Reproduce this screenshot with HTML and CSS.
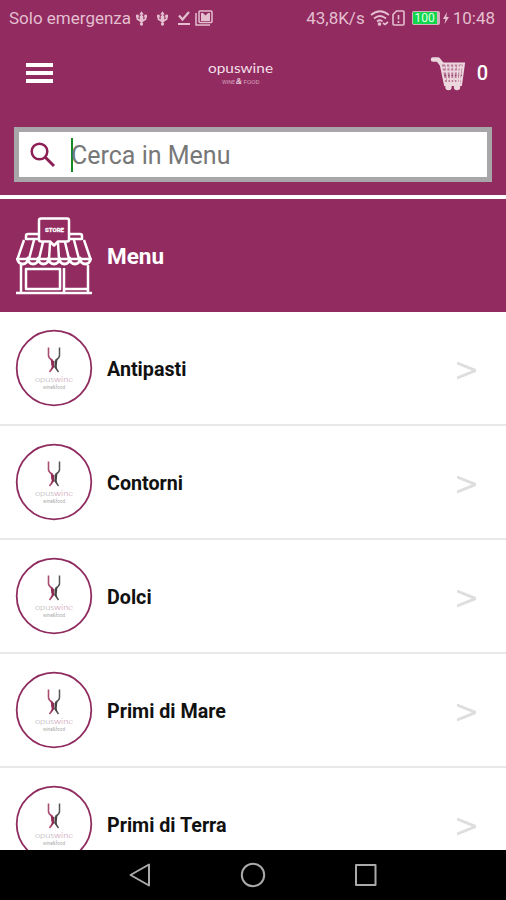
FILE: index.html
```html
<!DOCTYPE html>
<html lang="it">
<head>
    <meta charset="UTF-8">
    <meta name="viewport" content="width=device-width, initial-scale=1.0">
    <title>Opuswine - Menu</title>
    <link rel="stylesheet" href="styles.css">
</head>
<body>
    <!-- icons used more than once -->
    <svg class="defs" width="0" height="0">
        <symbol id="usb" viewBox="0 0 12 16">
            <path d="M6 15V2M1.500 5v3.500L6 11.500M10.500 5v3.500L6 11.500" fill="none" stroke="currentColor" stroke-width="1.800"/>
            <path d="M3.500 3.500L6 0l2.500 3.500zM0 4h3v3H0zM9 4h3v3H9zM4 5h4v5H4z" fill="currentColor"/>
            <circle cx="6" cy="14" r="1.800" fill="currentColor"/>
        </symbol>
        <symbol id="wine" viewBox="0 0 78 78">
            <circle cx="39" cy="39" r="37.300" fill="#fff" stroke="#8f2c60" stroke-width="1.800"/>
            <path d="M33.500 18.500v8q0 2.500 3.500 4.500v4l1 3-3.500 5" fill="none" stroke="#a84c70" stroke-width="1.600"/>
            <path d="M44.500 18.500v8q0 2.500-3.500 4.500v4l-1 3 3.500 5" fill="none" stroke="#555" stroke-width="1.500"/>
            <path d="M35.500 30l3.500 2v6l-3 4 .8-5z" fill="#8f2c55"/>
            <path d="M42.500 30l-3 2v6l3 4-.8-5z" fill="#444"/>
        </symbol>
    </svg>

    <div class="status-bar">
        <span class="carrier">Solo emergenza</span>
        <svg class="usb" width="11" height="15"><use href="#usb"/></svg>
        <svg class="usb second" width="11" height="15"><use href="#usb"/></svg>
        <svg class="download" width="14" height="16" viewBox="0 0 14 16" fill="none" stroke="currentColor" stroke-width="2.200">
            <path d="M2 5.500l3.500 4L12 2M1 14h12"/>
        </svg>
        <svg class="gallery" width="18" height="16" viewBox="0 0 18 16">
            <path d="M1 3v12h14" fill="none" stroke="currentColor" stroke-width="1.500"/>
            <rect x="4" y="1" width="13" height="11.500" rx="1" fill="none" stroke="currentColor" stroke-width="1.500"/>
            <path d="M6 3h2l2.500 2.500L13 3h2v8H6z" fill="currentColor"/>
        </svg>

        <span class="speed">43,8K/s</span>
        <svg class="wifi" width="20" height="16" viewBox="0 0 20 16" fill="none" stroke="currentColor" stroke-width="1.700">
            <path d="M1 5q9-7.500 18 0M4 8.500q6-5 12 0M7 11.500q3-2.500 5.500 0"/>
            <circle cx="9.500" cy="14" r="1" fill="currentColor"/>
            <path d="M13 13l2 1.500 3-2.500"/>
        </svg>
        <svg class="sim" width="13" height="16" viewBox="0 0 13 16" fill="none" stroke="currentColor" stroke-width="1.600">
            <path d="M4.500 1H11q1 0 1 1v12q0 1-1 1H2q-1 0-1-1V4.500zM6.500 5v4.500M6.500 11v2"/>
        </svg>
        <span class="battery">100</span>
        <svg class="bolt" width="6" height="12" viewBox="0 0 6 12"><path d="M4 0L0 7h2.500L1.500 12 6 5H3.300z" fill="currentColor"/></svg>
        <span class="clock">10:48</span>
    </div>

    <header>
        <div class="hamburger">
            <span></span>
            <span></span>
            <span></span>
        </div>
        <svg class="brand" width="68" height="28" viewBox="0 0 68 28">
            <text x="1" y="14" textLength="65" lengthAdjust="spacingAndGlyphs" class="brand-name">opuswine</text>
            <text x="15" y="24.500" textLength="13" lengthAdjust="spacingAndGlyphs" class="brand-sub">WINE</text>
            <text x="29" y="25" textLength="6" lengthAdjust="spacingAndGlyphs" class="brand-amp">&amp;</text>
            <text x="36.500" y="24.500" textLength="16" lengthAdjust="spacingAndGlyphs" class="brand-sub">FOOD</text>
        </svg>
        <div class="cart">
            <svg width="36" height="35" viewBox="0 0 36 35" fill="none" stroke="#ecd7df">
                <path d="M3 3.500h5l4 5" stroke-width="4.500" stroke-linecap="round" stroke-linejoin="round"/>
                <path d="M10.500 7.500H34L31 29H15z" fill="#b87896" stroke-width="2"/>
                <path d="M12 11.500h21M13 15.500h19M13 23h18" stroke-width="1.800" stroke-dasharray="3 .8"/>
                <path d="M14 19.500h18" stroke="#92446c" stroke-width="1.200"/>
                <path d="M16 8l2 20M20 8l1 20M24 8v20M28 8l-1 20M31 9l-2 19" stroke-width="1.600"/>
                <path d="M15 28h15" stroke-width="4"/>
                <circle cx="18.500" cy="31" r="3.200" fill="#ecd7df" stroke="none"/>
                <circle cx="27" cy="31" r="3.200" fill="#ecd7df" stroke="none"/>
            </svg>
            <span class="count">0</span>
        </div>
    </header>

    <div class="search">
        <svg width="26" height="26" viewBox="0 0 26 26" fill="none" stroke="#8c1f55" stroke-width="2.500">
            <circle cx="9.500" cy="9.500" r="7.800"/>
            <path d="M15 15l9 9" stroke-width="3"/>
        </svg>
        <div class="field"><span>Cerca in Menu</span></div>
    </div>

    <div class="title">
        <svg width="78" height="80" viewBox="0 0 78 80" fill="none" stroke="#fff" stroke-width="2.500" stroke-linejoin="round">
            <path d="M25 18H13q-2 0-2 2v4M53 18h12q2 0 2 2v4M11 23h14M53 23h14"/>
            <path d="M26 2.500h26q2 0 2 2v19q0 2-2 2h-9l-4 4-4-4h-9q-2 0-2-2v-19q0-2 2-2z"/>
            <path d="M9 24L2.500 43h73L69 24M19 24l-5 19M28 26l-4 17M35 27l-1 16M43 27l1 16M50 26l4 17M59 24l5 19"/>
            <!-- awning scallops -->
            <path d="M2.500 42c0 8 10.400 8 10.400 0c0 8 10.400 8 10.400 0c0 8 10.400 8 10.400 0c0 8 10.600 8 10.600 0c0 8 10.400 8 10.400 0c0 8 10.400 8 10.400 0c0 8 10.400 8 10.400 0" stroke-width="3"/>
            <path d="M6 49v27M73 49v27M1 77h76M49 52v24M11 53h34v20H11zM50 73h22"/>
            <text x="30" y="16" textLength="19" lengthAdjust="spacingAndGlyphs" class="store">STORE</text>
        </svg>
        <h1>Menu</h1>
    </div>

    <ul class="menu">
        <li>
            <svg class="logo">
                <use href="#wine"/>
                <text x="20" y="53" textLength="38" lengthAdjust="spacingAndGlyphs" class="wine-name">opus<tspan>wine</tspan></text>
                <text x="28" y="59.500" textLength="22" lengthAdjust="spacingAndGlyphs" class="wine-sub">wine&amp;food</text>
            </svg>
            <span>Antipasti</span>
            <i class="arrow"></i>
        </li>
        <li>
            <svg class="logo">
                <use href="#wine"/>
                <text x="20" y="53" textLength="38" lengthAdjust="spacingAndGlyphs" class="wine-name">opus<tspan>wine</tspan></text>
                <text x="28" y="59.500" textLength="22" lengthAdjust="spacingAndGlyphs" class="wine-sub">wine&amp;food</text>
            </svg>
            <span>Contorni</span>
            <i class="arrow"></i>
        </li>
        <li>
            <svg class="logo">
                <use href="#wine"/>
                <text x="20" y="53" textLength="38" lengthAdjust="spacingAndGlyphs" class="wine-name">opus<tspan>wine</tspan></text>
                <text x="28" y="59.500" textLength="22" lengthAdjust="spacingAndGlyphs" class="wine-sub">wine&amp;food</text>
            </svg>
            <span>Dolci</span>
            <i class="arrow"></i>
        </li>
        <li>
            <svg class="logo">
                <use href="#wine"/>
                <text x="20" y="53" textLength="38" lengthAdjust="spacingAndGlyphs" class="wine-name">opus<tspan>wine</tspan></text>
                <text x="28" y="59.500" textLength="22" lengthAdjust="spacingAndGlyphs" class="wine-sub">wine&amp;food</text>
            </svg>
            <span>Primi di Mare</span>
            <i class="arrow"></i>
        </li>
        <li>
            <svg class="logo">
                <use href="#wine"/>
                <text x="20" y="53" textLength="38" lengthAdjust="spacingAndGlyphs" class="wine-name">opus<tspan>wine</tspan></text>
                <text x="28" y="59.500" textLength="22" lengthAdjust="spacingAndGlyphs" class="wine-sub">wine&amp;food</text>
            </svg>
            <span>Primi di Terra</span>
            <i class="arrow"></i>
        </li>
    </ul>

    <nav>
        <svg width="24" height="26" viewBox="0 0 24 26"><path d="M2.500 13L21 2.500v21z"/></svg>
        <svg width="26" height="26" viewBox="0 0 26 26"><circle cx="13" cy="13" r="11.200"/></svg>
        <svg width="24" height="24" viewBox="0 0 24 24"><rect x="2" y="2" width="19.500" height="20"/></svg>
    </nav>
</body>
</html>
```

FILE: styles.css
```css
* {
    box-sizing: border-box;
}

body {
    margin: 0;
    height: 900px;
    display: flex;
    flex-direction: column;
    overflow: hidden;
    background-color: #922b5f;
    font-family: Roboto, sans-serif;
}

svg {
    display: block;
    flex-shrink: 0;
}

.defs {
    position: absolute;
}

/* status bar */
.status-bar {
    display: flex;
    align-items: center;
    flex-shrink: 0;
    height: 36px;
    padding: 0 11px 0 9px;
    font-size: 17px;
    line-height: 36px;
    color: #e3bfd0;
}

.carrier {
    width: 122px;
    white-space: nowrap;
}

.usb {
    margin-left: 5px;
}

.usb.second {
    margin-left: 10px;
}

.download {
    margin-left: 9px;
}

.gallery {
    margin-left: 4px;
}

.speed {
    margin-left: auto;
}

.wifi {
    margin-left: 5px;
}

.sim {
    margin-left: 2px;
}

.battery {
    width: 28px;
    height: 14px;
    margin-left: 7px;
    border: 1px solid #d7b0bf;
    border-right-width: 3px;
    border-radius: 2px;
    background-color: #12d64b;
    color: #e0ffe6;
    font-size: 12px;
    line-height: 12px;
    text-align: center;
}

.bolt {
    margin-left: 3px;
}

.clock {
    margin-left: 4px;
}

/* header */
header {
    display: flex;
    align-items: center;
    flex-shrink: 0;
    height: 74px;
    padding: 0 18px 0 26px;
}

.hamburger {
    display: flex;
    flex-direction: column;
    gap: 4px;
    width: 27px;
}

.hamburger span {
    height: 4px;
    background-color: #fff;
}

.brand {
    margin-left: 154px;
}

.brand text {
    fill: #f3dfe8;
}

.brand .brand-name {
    font-family: Lato, sans-serif;
    font-size: 13.5px;
}

.brand .brand-sub {
    font-size: 6px;
    opacity: 0.65;
}

.brand-amp {
    font-family: "Liberation Serif", serif;
    font-size: 9px;
    font-style: italic;
    font-weight: bold;
}

.cart {
    display: flex;
    align-items: center;
    gap: 11px;
    margin-left: auto;
}

.count {
    color: #fff;
    font-size: 20px;
    font-weight: 500;
}

/* search */
.search {
    display: flex;
    align-items: center;
    flex-shrink: 0;
    height: 55px;
    margin: 17px 14px 13px;
    padding-left: 11px;
    border: 5px solid #a8a6a8;
    background-color: #fff;
}

.field {
    height: 34px;
    margin-left: 15px;
    border-left: 2px solid #158a22;
    color: #777;
    font-size: 25px;
    line-height: 36px;
}

.field span {
    margin-left: -2px;
}

/* menu heading */
.title {
    display: flex;
    align-items: center;
    flex-shrink: 0;
    height: 117px;
    padding-left: 15px;
    border-top: 4px solid #fff;
}

h1 {
    margin: 0 0 0 14px;
    color: #fff;
    font-size: 22.5px;
    font-weight: bold;
}

.store {
    fill: #fff;
    stroke-width: 0.3;
    font-size: 6px;
    font-weight: bold;
}

/* list */
.menu {
    flex: 1;
    min-height: 0;
    margin: 0;
    padding: 0;
    overflow: hidden;
    list-style: none;
    background-color: #fff;
}

.menu li {
    display: flex;
    align-items: center;
    height: 114px;
    padding: 0 30px 0 15px;
    border-bottom: 2px solid #e8e8e8;
    color: #111;
    font-size: 19.7px;
    font-weight: bold;
}

.menu li > span {
    padding-top: 2px;
}

.logo {
    width: 78px;
    height: 78px;
    margin-right: 14px;
}

.wine-name {
    fill: #a9a0a5;
    font-family: Lato, sans-serif;
    font-size: 8.5px;
    font-weight: 300;
}

.wine-name tspan {
    fill: #c27d9d;
}

.wine-sub {
    fill: #aaa;
    font-size: 4.5px;
    font-weight: normal;
}

.arrow {
    width: 19px;
    height: 18px;
    margin: 5px 0 0 auto;
    background-color: #dedede;
    clip-path: polygon(0 0, 100% 42%, 100% 58%, 0 100%, 0 84%, 78% 50%, 0 16%);
}

/* android navigation */
nav {
    display: flex;
    align-items: center;
    justify-content: center;
    gap: 88px;
    flex-shrink: 0;
    height: 50px;
    background-color: #000;
}

nav svg {
    fill: none;
    stroke: #aaa;
    stroke-width: 2;
    stroke-linejoin: round;
}
```
